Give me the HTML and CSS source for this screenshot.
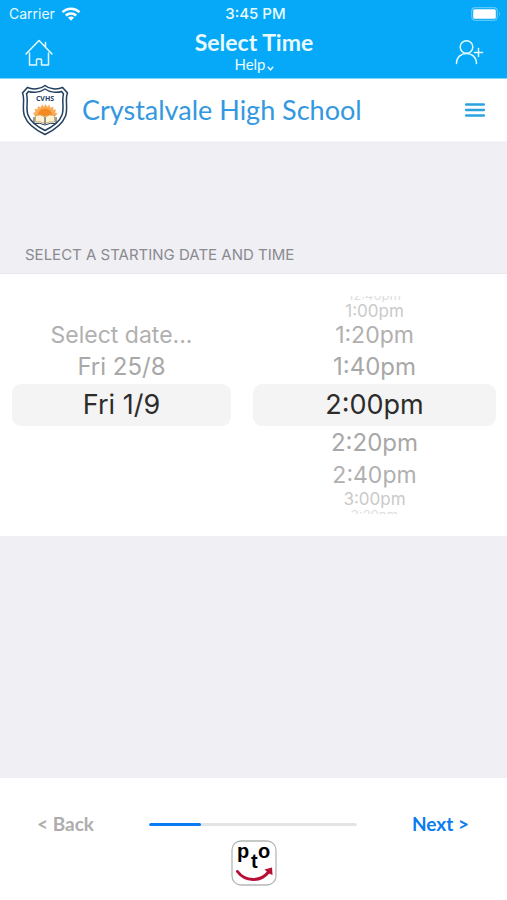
FILE: index.html
```html
<!DOCTYPE html>
<html lang="en">
<head>
<meta charset="utf-8">
<meta name="viewport" content="width=device-width, initial-scale=1">
<title>Select Time</title>
<link rel="stylesheet" href="styles.css">
</head>
<body>
<header class="top">
  <div class="status">
    <span class="carrier">Carrier
      <svg width="20" height="14" viewBox="0 0 20 14" aria-hidden="true"><g fill="none" stroke="#fff" stroke-width="2.5"><path d="M1.5 5.2C6.2.6 13.800.6 18.500 5.200"/><path d="M4.800 8.500C7.700 5.700 12.300 5.700 15.200 8.500"/></g><path fill="#fff" d="M7 10.600q3-2.400 6 0l-3 3.100z"/></svg>
    </span>
    <span class="clock">3:45 PM</span>
    <svg class="battery" width="31" height="14" viewBox="0 0 31 14" aria-hidden="true"><rect x=".7" y=".7" width="25.600" height="12.600" rx="3.500" fill="none" stroke="#5cc8fa" stroke-width="1.200"/><rect x="2.200" y="2.200" width="22.600" height="9.600" rx="1.500" fill="#fff"/><path d="M28 4.500q2 2.500 0 5z" fill="#5cc8fa"/></svg>
  </div>
  <nav class="bar">
    <a class="icon-link" href="#" aria-label="Home">
      <svg width="30" height="30" viewBox="0 0 30 30" fill="none" stroke="#e4fbff" stroke-width="1.500" stroke-linejoin="round" stroke-linecap="round"><path d="M2 16 15 2.500 28 16M5.500 15v12h7v-5q0-1 1-1h3q1 0 1 1v5h7V15M21.500 9V4.500"/></svg>
    </a>
    <div class="heading">
      <h1>Select Time</h1>
      <button class="help" type="button">Help<svg width="7" height="5" viewBox="0 0 7 5" fill="none" stroke="#e4fbff" stroke-width="1.500" aria-hidden="true"><path d="m.8.8 2.700 3 2.700-3"/></svg></button>
    </div>
    <a class="icon-link" href="#" aria-label="Add person">
      <svg width="30" height="30" viewBox="0 0 30 30" fill="none" stroke="#e4fbff" stroke-width="1.500" stroke-linecap="round"><circle cx="12.500" cy="9" r="6.300"/><path d="M2.500 25.500C2.700 12 22.300 12 22.500 25.500M20.500 14.500h8M24.500 10.500v8"/></svg>
    </a>
  </nav>
</header>

<section class="school">
  <svg class="crest" width="48" height="52" viewBox="0 0 48 52" aria-hidden="true">
    <path d="M24 1.500C20 5 12 6 6.500 3.500L1.500 9c3 7-1 14 2 23 3 8 11 14 20.500 18.500C33.500 46 41.500 40 44.500 32c3-9-1-16 2-23l-5-5.500C36 6 28 5 24 1.500z" fill="#fff" stroke="#23405f" stroke-width="1.500"/>
    <path d="M24 5C19 8.500 12 9 7.500 7.500L5.500 10c2 7-1 14 1.500 21 2.500 7 9 11.500 17 15.500 8-4 14.500-8.500 17-15.500 2.500-7-.5-14 1.500-21l-2-2.500C36 9 29 8.500 24 5z" fill="#fff" stroke="#23405f" stroke-width="1.500"/>
    <path d="m14 32-2-3 2.500-1-1-3 3 .2.300-3.200 2.700 1.500L21 20.500l2 2.300 1.500-2.800 1.500 2.800 2.500-2 .7 3 3-1.300v3.200l3-.2-1.200 3 2.500 1-2 2.500z" fill="#f9ad5a"/>
    <path d="M16.500 32a7.500 7.500 0 0 1 15 0z" fill="#f58a20"/>
    <path d="M14.500 31.500q5-2 9.500 1.500 4.500-3.500 9.500-1.500V38q-5-1-9.500 1.500Q19.500 37 14.500 38z" fill="#fff2cf" stroke="#c8964b" stroke-width=".8"/>
    <path d="M13 33v6.500q6-1 11 1.500 5-2.500 11-1.500V33M24 33v7" fill="none" stroke="#23405f" stroke-width="1"/>
    <text class="crest-text" x="24" y="16.500" text-anchor="middle">CVHS</text>
  </svg>
  <h2>Crystalvale High School</h2>
  <button class="menu" type="button" aria-label="Menu">
    <svg width="20" height="14" viewBox="0 0 20 14" stroke="#2aa3df" stroke-width="2.500" stroke-linecap="round"><path d="M1.200 1.500h17.600M1.200 7h17.600M1.200 12.500h17.600"/></svg>
  </button>
</section>

<main>
  <h3 id="picker-title">SELECT A STARTING DATE AND TIME</h3>
  <div class="picker" role="group" aria-labelledby="picker-title">
    <div class="wheel dates" role="listbox" aria-label="Date">
      <button type="button" role="option" class="row far">Select date...</button>
      <button type="button" role="option" class="row near">Fri 25/8</button>
      <button type="button" role="option" class="row selected" aria-selected="true">Fri 1/9</button>
    </div>
    <div class="wheel" role="listbox" aria-label="Time">
      <button type="button" role="option" class="row sliver before">12:40pm</button>
      <button type="button" role="option" class="row edge">1:00pm</button>
      <button type="button" role="option" class="row far">1:20pm</button>
      <button type="button" role="option" class="row near">1:40pm</button>
      <button type="button" role="option" class="row selected" aria-selected="true">2:00pm</button>
      <button type="button" role="option" class="row near">2:20pm</button>
      <button type="button" role="option" class="row far">2:40pm</button>
      <button type="button" role="option" class="row edge">3:00pm</button>
      <button type="button" role="option" class="row sliver after">3:20pm</button>
    </div>
  </div>
</main>

<footer>
  <div class="steps">
    <button class="back" type="button">&lt; Back</button>
    <progress value="1" max="4" aria-label="Progress">25%</progress>
    <button class="next" type="button">Next &gt;</button>
  </div>
  <svg class="pto" width="46" height="46" viewBox="0 0 46 46" role="img" aria-label="pto">
    <rect x="1" y="1" width="44" height="44" rx="9" fill="#fff" stroke="#b5b8b8" stroke-width="1.300"/>
    <g class="pto-text"><text x="6" y="18">p</text><text x="20" y="28">t</text><text x="27" y="18">o</text></g>
    <path d="M6.500 31.500C14 42 30 42 37.500 32" fill="none" stroke="#b90f36" stroke-width="3" stroke-linecap="round"/>
    <path d="M33.500 29.500 41 27.500l.5 7.500-3.500-1.500z" fill="#b90f36"/>
  </svg>
</footer>
</body>
</html>
```
FILE: styles.css
```css
* { box-sizing: border-box; }

body {
  margin: 0;
  min-height: 100vh;
  display: flex;
  flex-direction: column;
  background: #efeff4;
  font-family: Lato, "Liberation Sans", sans-serif;
}

h1, h2, h3 { margin: 0; font-weight: 400; }

button {
  border: 0;
  padding: 0;
  background: none;
  font: inherit;
  color: inherit;
  cursor: pointer;
}

svg { display: block; flex: none; }

.top {
  background: #05a9f7;
  color: #e8faff;
  border-bottom: 1px solid #7dd8fa;
}

.status {
  display: grid;
  grid-template-columns: 1fr auto 1fr;
  align-items: center;
  height: 27px;
  padding: 0 5px 0 9px;
  font: 14px/20px Inter, sans-serif;
}

.carrier { display: flex; align-items: center; gap: 6px; }
.clock { font-size: 15px; font-weight: 500; }
.battery { justify-self: end; }

.bar {
  display: flex;
  justify-content: space-between;
  align-items: center;
  height: 51px;
  padding: 0 23px 0 24px;
}

.heading { display: flex; flex-direction: column; align-items: center; padding-bottom: 2px; }
.heading h1 { font-size: 23px; line-height: 26px; font-weight: 700; }
.help { display: flex; align-items: center; gap: 1px; font-size: 15px; line-height: 19px; }
.help svg { margin-top: 8px; }

.school {
  display: flex;
  align-items: center;
  height: 63px;
  padding: 0 22px 0 21px;
  background: #fff;
  border-bottom: 1px solid #f4f4f6;
}

.school h2 {
  flex: 1;
  margin-left: 13px;
  font-size: 27px;
  line-height: 34px;
  color: #3498e0;
}

.crest-text { font: 700 7px "Open Sans", sans-serif; fill: #23405f; }

main { flex: 1; padding-top: 102px; }

h3 {
  padding: 0 25px 8px;
  font: 15px/21px Inter, sans-serif;
  color: #8a8a8f;
}

.picker {
  display: grid;
  grid-template-columns: 219fr 243fr;
  gap: 22px;
  padding: 22px 11px 22px 12px;
  background: #fff;
  border-top: 1px solid #e8e8ec;
}

.wheel {
  display: flex;
  flex-direction: column;
  font-family: Inter, sans-serif;
  color: #a8a8a8;
}

.dates { justify-content: flex-end; padding-bottom: 88px; }

.row { flex: none; text-align: center; overflow: hidden; }
.selected {
  height: 42px;
  border-radius: 9px;
  background: #f4f4f4;
  color: #2c2c2c;
  font-size: 27px;
  line-height: 42px;
}
.near { height: 34px; font-size: 24px; line-height: 34px; }
.far { height: 30px; font-size: 23px; line-height: 30px; color: #b0b0b0; }
.edge { height: 18px; font-size: 17px; line-height: 18px; color: #cacaca; }
.sliver {
  display: flex;
  justify-content: center;
  height: 6px;
  font-size: 13px;
  line-height: 14px;
  color: #dedede;
}
.before { align-items: flex-end; }
.after { align-items: flex-start; }

footer {
  display: flex;
  flex-direction: column;
  align-items: center;
  height: 122px;
  padding-top: 34px;
  background: #fff;
}

.steps {
  align-self: stretch;
  display: grid;
  grid-template-columns: 1fr 48% 1fr;
  align-items: center;
  padding: 0 38px 0 37px;
  font-size: 19px;
  line-height: 24px;
  font-weight: 700;
}

.back { justify-self: start; color: #adadad; }
.next { justify-self: end; color: #087cf0; }

progress {
  appearance: none;
  width: 100%;
  height: 3px;
  border: 0;
  border-radius: 2px;
  overflow: hidden;
  background: #e3e4e6;
}
progress::-webkit-progress-bar { background: #e3e4e6; }
progress::-webkit-progress-value { background: #087cf0; border-radius: 2px; }

.pto { margin-top: 4px; }
.pto-text { font: 700 20px "Liberation Sans", sans-serif; fill: #000; }
```
